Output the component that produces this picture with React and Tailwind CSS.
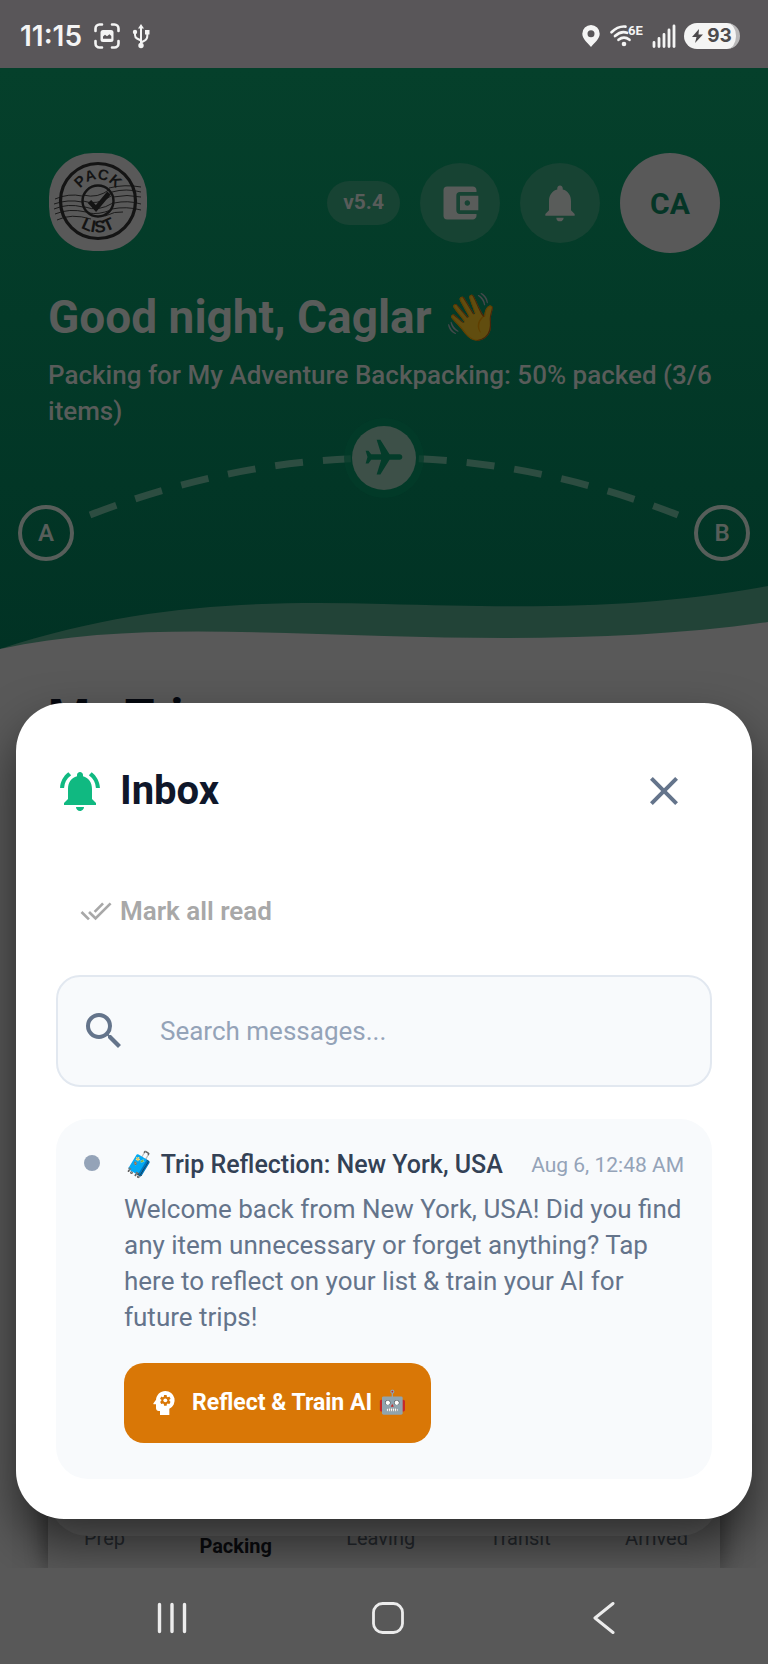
import React from "react";
import {
  MdAccountBalanceWallet,
  MdClose,
  MdDoneAll,
  MdFlight,
  MdNotifications,
  MdNotificationsActive,
  MdPsychology,
  MdSearch,
} from "react-icons/md";

function StatusBar() {
  return (
    <div className="flex h-[68px] shrink-0 items-center justify-between bg-[#595659] pr-7 pl-5 text-[#f4f4f4]">
      <div className="flex items-center gap-3 pt-1">
        <span className="font-[Inter,sans-serif] text-[28px] leading-8 font-semibold">11:15</span>
        <svg className="size-[26px]" viewBox="0 0 26 26" fill="none" aria-hidden="true">
          <path
            d="M1.500 8V5.500a4 4 0 0 1 4-4H8M18 1.500h2.500a4 4 0 0 1 4 4V8M24.500 18v2.500a4 4 0 0 1-4 4H18M8 24.500H5.500a4 4 0 0 1-4-4V18"
            stroke="currentColor"
            strokeWidth="2.600"
            strokeLinecap="round"
          />
          <rect x="6.500" y="7" width="13" height="12" rx="2.500" fill="currentColor" />
          <path d="M9 15.800v-2.300l2-1.800 2 1.500 2.500-2 1.800 1.800v2.800z" fill="#595659" />
        </svg>
        <svg className="h-[26px] w-[18px]" viewBox="0 0 18 26" fill="none" aria-hidden="true">
          <path d="M9 4v18M9 17.500 L5 15.500Q3 14.500 3 12V9.500M9 19.500l4-2.200Q15.300 16 15.300 13V9" stroke="currentColor" strokeWidth="2" />
          <path d="M9 1l3 4.500H6z" fill="currentColor" />
          <circle cx="3" cy="9" r="2.200" fill="currentColor" />
          <rect x="13" y="7" width="4.500" height="4.500" fill="currentColor" />
          <circle cx="9" cy="22.500" r="2.700" fill="currentColor" />
        </svg>
      </div>
      <div className="flex items-center gap-2 pt-1">
        <svg className="h-[22px] w-[18px]" viewBox="0 0 18 22" aria-hidden="true">
          <path
            fillRule="evenodd"
            fill="currentColor"
            d="M9 0a8.700 8.700 0 0 1 8.700 8.700C17.700 14 12 18 9 22 6 18 .3 14 .3 8.700A8.700 8.700 0 0 1 9 0zm0 5.200a3.500 3.500 0 1 0 0 7 3.500 3.500 0 0 0 0-7z"
          />
        </svg>
        <svg className="h-[24px] w-[36px]" viewBox="0 0 36 24" aria-hidden="true">
          <g fill="none" stroke="currentColor" strokeWidth="2.700" strokeLinecap="round">
            <path d="M3.500 8.200Q10 1.800 17.500 2.600" />
            <path d="M7 12Q13 6.500 19 8.800" />
            <path d="M10.500 15.800Q16 11.500 21.500 15.800" />
          </g>
          <circle cx="16" cy="20" r="2.300" fill="currentColor" />
          <text x="20" y="10.500" fontSize="13" fontWeight="700" fontFamily="Roboto, sans-serif" fill="currentColor">
            6E
          </text>
        </svg>
        <svg className="h-[24px] w-[24px]" viewBox="0 0 24 24" aria-hidden="true">
          <g stroke="currentColor" strokeWidth="2.800" strokeLinecap="round">
            <path d="M2 18.500v4M7 14.500v8M12 10.500v12M17 6v16.500" />
            <path d="M22 2v20.500" />
          </g>
        </svg>
        <div className="flex h-[26px] w-[56px] items-center justify-center gap-1 rounded-full border-r-4 border-[#b9b8b9] bg-[#f4f4f4] pl-1 text-[#4c4a4c]">
          <svg className="h-[14px] w-[11px]" viewBox="0 0 11 14" aria-hidden="true">
            <path d="M7 0L0 8h4.500L3 14l8-8.500H6.500z" fill="currentColor" />
          </svg>
          <span className="font-[Inter,sans-serif] text-[19px] leading-6 font-bold">93</span>
        </div>
      </div>
    </div>
  );
}

function Logo() {
  return (
    <svg className="size-[100px]" viewBox="-1 0 100 100" role="img" aria-label="Pack List">
      <rect width="98" height="98" rx="44" fill="#595959" />
      <g fill="none" stroke="#141414">
        <circle cx="49" cy="48" r="37.500" strokeWidth="3.200" />
        <circle cx="49" cy="48" r="15.500" strokeWidth="2.400" />
        <g strokeWidth="0.900">
          <path d="M6 46Q20 40 33 43M5 51q14-5 28-2M5 56q14-6 29-2M6 61q14-6 31-2M8 67q14-7 34-1" />
          <path d="M60 35q16-4 32-1M63 39q14-4 29 0M64 44q14-3 28 0M65 50q14-3 27 1M63 56q14-3 29 1" />
          <path d="M34 42q15 4 27-6M34 48q14 5 28-5M36 54q13 5 28-4M40 60q9 2 22-3M56 63q10-5 18-4" />
        </g>
        <path d="M40.500 48.500l6.500 7L60 40" strokeWidth="4.600" />
      </g>
      <path id="logo-top" d="M27.500 48a21.500 21.500 0 0 1 43 0" fill="none" />
      <path id="logo-bottom" d="M17.500 48a31.500 31.500 0 0 0 63 0" fill="none" />
      <g fontFamily="Liberation Sans, sans-serif" fontWeight="700" fill="#141414" textAnchor="middle">
        <text fontSize="15">
          <textPath href="#logo-top" startOffset="50%">PACK</textPath>
        </text>
        <text fontSize="17">
          <textPath href="#logo-bottom" startOffset="50%">LIST</textPath>
        </text>
      </g>
    </svg>
  );
}

function RoutePoint({ children }) {
  return (
    <div className="flex size-14 items-center justify-center rounded-full border-4 border-[#575e5a] text-2xl font-semibold text-[#575e5a]">
      {children}
    </div>
  );
}

function Hero() {
  return (
    <header className="bg-linear-to-b from-[#05402b] to-[#013224] text-[#595c5a]">
      <div className="flex items-center justify-between px-12 pt-[85px]">
        <Logo />
        <div className="flex items-center gap-5">
          <span className="flex h-11 items-center rounded-full bg-[#174333] px-4 text-[21px] font-bold">v5.4</span>
          <button aria-label="Wallet" className="flex size-20 items-center justify-center rounded-full bg-[#174333]">
            <MdAccountBalanceWallet className="size-11" />
          </button>
          <button aria-label="Notifications" className="flex size-20 items-center justify-center rounded-full bg-[#174333]">
            <MdNotifications className="size-11" />
          </button>
          <button className="flex size-[100px] items-center justify-center rounded-full bg-[#595959] text-[30px] font-bold text-[#053526]">
            CA
          </button>
        </div>
      </div>
      <div className="px-12 pt-9">
        <h1 className="text-[46px] leading-[56px] font-bold">
          Good night, Caglar <span className="brightness-[0.38]">👋</span>
        </h1>
        <p className="mt-3 text-[26px] leading-9 font-medium">
          Packing for My Adventure Backpacking: 50% packed (3/6 items)
        </p>
      </div>
      <div className="relative -mt-3 flex h-[168px] items-start justify-between px-[18px] pt-[88px]">
        <svg className="absolute inset-x-0 top-0 h-[168px] w-full" viewBox="0 0 768 168" aria-hidden="true">
          <path d="M90 98Q384 -16 678 98" fill="none" stroke="#2d4d41" strokeWidth="7" strokeDasharray="28 20" />
          <circle cx="384" cy="41" r="40" fill="#033c29" fillOpacity="0.700" />
          <circle cx="384" cy="41" r="32" fill="#3d5048" />
        </svg>
        <div className="absolute inset-x-0 top-[19px] flex justify-center">
          <MdFlight className="size-11 rotate-90 text-[#043c2a]" />
        </div>
        <RoutePoint>A</RoutePoint>
        <RoutePoint>B</RoutePoint>
      </div>
      <svg className="block h-[68px] w-full" viewBox="0 0 768 68" preserveAspectRatio="none" aria-hidden="true">
        <path d="M0 64C140 18 260 16 384 19C540 23 640 24 768 1V68H0z" fill="#224337" />
        <path d="M0 64C120 38 250 48 384 51C520 55 650 54 768 37V68H0z" fill="#595959" />
      </svg>
    </header>
  );
}

function InboxDialog() {
  return (
    <section
      role="dialog"
      aria-labelledby="inbox-title"
      className="absolute inset-x-4 bottom-[49px] z-20 rounded-[48px] bg-white p-10 shadow-[0_24px_48px_rgba(0,0,0,0.55)]"
    >
      <div className="flex h-24 items-center">
        <MdNotificationsActive className="size-12 text-[#10b981]" />
        <h2 id="inbox-title" className="ml-4 flex-1 text-[40px] leading-[48px] font-bold text-[#0f172a]">
          Inbox
        </h2>
        <button aria-label="Close" className="flex size-24 items-center justify-center text-[#64748b]">
          <MdClose className="size-12" />
        </button>
      </div>
      <button className="mt-8 flex h-20 items-center gap-2 px-6 text-[26px] font-semibold text-[#a8a8a8]">
        <MdDoneAll className="size-8" />
        Mark all read
      </button>
      <label className="mt-6 flex h-28 items-center gap-8 rounded-3xl border-2 border-[#e2e8f0] bg-[#f8fafc] px-[22px]">
        <MdSearch className="size-12 text-[#64748b]" />
        <input
          aria-label="Search messages"
          placeholder="Search messages..."
          className="min-w-0 flex-1 bg-transparent text-[26px] outline-none placeholder:text-[#94a3b8]"
        />
      </label>
      <article className="mt-8 flex gap-6 rounded-[32px] bg-[#f8fafc] px-7 pt-7 pb-9">
        <span className="mt-2 size-4 shrink-0 rounded-full bg-[#94a3b8]" />
        <div className="min-w-0 flex-1">
          <div className="flex items-center justify-between">
            <h3 className="text-[25px] leading-9 font-medium text-[#334155]">🧳 Trip Reflection: New York, USA</h3>
            <time className="text-[21px] leading-9 text-[#94a3b8]">Aug 6, 12:48 AM</time>
          </div>
          <p className="mt-2 text-[26px] leading-9 text-[#64748b]">
            Welcome back from New York, USA! Did you find any item unnecessary or forget anything? Tap here to reflect
            on your list &amp; train your AI for future trips!
          </p>
          <button className="mt-7 flex h-20 items-center gap-3 rounded-[20px] bg-[#d97706] px-6 text-[23px] font-bold text-white">
            <MdPsychology className="size-8" />
            Reflect &amp; Train AI 🤖
          </button>
        </div>
      </article>
    </section>
  );
}

function TripStages() {
  return (
    <div className="mx-12 mt-auto bg-[#595959] shadow-[0_0_24px_rgba(0,0,0,0.5)]">
      <div className="relative z-10 h-28 rounded-b-[40px] bg-[#666666]" />
      <ol className="-mt-3 flex h-11 justify-between pr-8 pl-9 text-xl text-[#25292e]">
        <li>Prep</li>
        <li className="pt-2 font-bold text-[#0a0b0e]">Packing</li>
        <li>Leaving</li>
        <li>Transit</li>
        <li>Arrived</li>
      </ol>
    </div>
  );
}

function NavigationBar() {
  return (
    <nav className="grid h-24 shrink-0 grid-cols-3 items-center justify-items-center bg-[#585858] pt-1 pr-14 pl-16 text-[#ececec]">
      <button aria-label="Recent apps">
        <svg className="size-8" viewBox="0 0 32 32" fill="none" stroke="currentColor" strokeWidth="3.400" strokeLinecap="round">
          <path d="M3.500 2.500v27M16 2.500v27M28.500 2.500v27" />
        </svg>
      </button>
      <button aria-label="Home">
        <svg className="size-8" viewBox="0 0 32 32" fill="none" stroke="currentColor" strokeWidth="2.800">
          <rect x="1.500" y="1.500" width="29" height="29" rx="9" />
        </svg>
      </button>
      <button aria-label="Back">
        <svg className="size-8" viewBox="0 0 32 32" fill="none" stroke="currentColor" strokeWidth="3" strokeLinecap="round" strokeLinejoin="round">
          <path d="M25 1.500L7 16l18 14.500" />
        </svg>
      </button>
    </nav>
  );
}

export default function App() {
  return (
    <div className="flex min-h-screen flex-col bg-[#595959] font-[Roboto,sans-serif]">
      <StatusBar />
      <main className="relative flex flex-1 flex-col overflow-hidden">
        <Hero />
        <h2 className="px-12 pt-9 text-[48px] leading-[56px] font-bold text-[#05080f]">My Trips</h2>
        <TripStages />
        <InboxDialog />
      </main>
      <NavigationBar />
    </div>
  );
}
